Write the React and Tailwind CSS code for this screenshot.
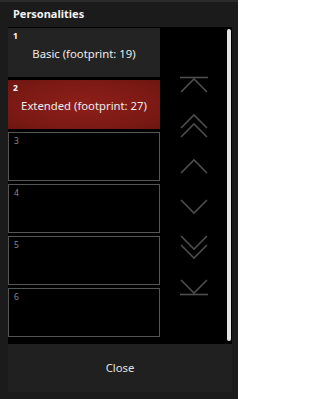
import React from "react";

const font = { fontFamily: '"Noto Sans", "Open Sans", sans-serif' };

function Chevrons({ kind }) {
  const stroke = "#4d4d4d";
  if (kind === "top") {
    return (
      <svg width="28" height="17" viewBox="0 0 28 17" fill="none" stroke={stroke} strokeWidth="1.6">
        <path d="M0 1.5H28" />
        <path d="M1 16L14 3L27 16" />
      </svg>
    );
  }
  if (kind === "bottom") {
    return (
      <svg width="28" height="17" viewBox="0 0 28 17" fill="none" stroke={stroke} strokeWidth="1.6">
        <path d="M1 1L14 14L27 1" />
        <path d="M0 15.5H28" />
      </svg>
    );
  }
  if (kind === "upup") {
    return (
      <svg width="28" height="25" viewBox="0 0 28 25" fill="none" stroke={stroke} strokeWidth="1.6">
        <path d="M1 15L14 2L27 15" />
        <path d="M1 24L14 11L27 24" />
      </svg>
    );
  }
  if (kind === "downdown") {
    return (
      <svg width="28" height="25" viewBox="0 0 28 25" fill="none" stroke={stroke} strokeWidth="1.6">
        <path d="M1 1L14 14L27 1" />
        <path d="M1 10L14 23L27 10" />
      </svg>
    );
  }
  if (kind === "up") {
    return (
      <svg width="28" height="17" viewBox="0 0 28 17" fill="none" stroke={stroke} strokeWidth="1.6">
        <path d="M1 15L14 2L27 15" />
      </svg>
    );
  }
  return (
    <svg width="28" height="17" viewBox="0 0 28 17" fill="none" stroke={stroke} strokeWidth="1.6">
      <path d="M1 2L14 15L27 2" />
    </svg>
  );
}

function Slot({ n, label, active, filled }) {
  let cls = "relative h-[49px] w-[152px] flex items-center justify-center";
  if (active) cls += " bg-[radial-gradient(ellipse_at_center,#8e1f19_0%,#7a1914_70%,#6e1611_100%)]";
  else if (filled) cls += " bg-[#232323]";
  else cls += " bg-black border border-[#555555]";
  return (
    <div className={cls}>
      <span
        className={
          "absolute left-[5px] top-[4px] text-[8.5px] leading-none " +
          (filled || active ? "text-white font-bold" : "text-[#8a8a8a]")
        }
      >
        {n}
      </span>
      {label && <span className="text-[11.3px] text-[#ececec] mt-[3px]">{label}</span>}
    </div>
  );
}

export default function App() {
  const slots = [
    { n: 1, label: "Basic (footprint: 19)", filled: true },
    { n: 2, label: "Extended (footprint: 27)", active: true },
    { n: 3 },
    { n: 4 },
    { n: 5 },
    { n: 6 },
  ];
  return (
    <div className="w-[238px] h-[399px] bg-[#1b1b1b] border-t-2 border-[#2b2b2b] flex flex-col" style={font}>
      <div className="h-[25px] pl-[13px] flex items-center text-[11px] font-bold text-[#f2f2f2]">
        Personalities
      </div>
      <div className="ml-[8px] w-[224px] h-[317px] bg-black flex">
        <div className="flex flex-col gap-[3px] pt-[1px]">
          {slots.map((s) => (
            <Slot key={s.n} {...s} />
          ))}
        </div>
        <div className="w-[67px] flex flex-col items-center pt-[49px]">
          <Chevrons kind="top" />
          <div className="mt-[20px]"><Chevrons kind="upup" /></div>
          <div className="mt-[20px]"><Chevrons kind="up" /></div>
          <div className="mt-[23px]"><Chevrons kind="down" /></div>
          <div className="mt-[20px]"><Chevrons kind="downdown" /></div>
          <div className="mt-[19px]"><Chevrons kind="bottom" /></div>
        </div>
        <div className="pt-[2px]">
          <div className="w-[4px] h-[312px] bg-[#e4e4e4] rounded-full" />
        </div>
      </div>
      <div className="ml-[8px] w-[224px] h-[48px] bg-[#202020] flex items-center justify-center text-[11.3px] text-[#e0e0e0]">
        Close
      </div>
    </div>
  );
}
